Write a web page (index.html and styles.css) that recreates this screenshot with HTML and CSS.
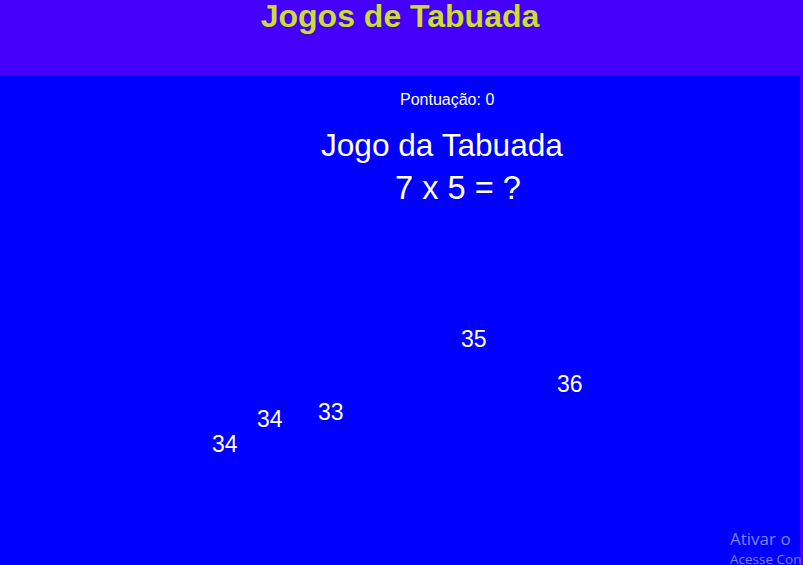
FILE: index.html
```html
<!DOCTYPE html>
<html lang="pt-BR">
<head>
<meta charset="utf-8">
<title>Jogos de Tabuada</title>
<link rel="stylesheet" href="styles.css">
</head>
<body>
  <header class="topbar">
    <h1 class="title">Jogos de Tabuada</h1>
  </header>
  <main class="game">
    <p class="score">Pontuação: 0</p>
    <h2 class="game-title">Jogo da Tabuada</h2>
    <p class="question">7 x 5 = ?</p>
    <div class="arena">
      <span class="answer" style="left:461px; top:122px">35</span>
      <span class="answer" style="left:557px; top:166.5px">36</span>
      <span class="answer" style="left:318px; top:195px">33</span>
      <span class="answer" style="left:257px; top:201.5px">34</span>
      <span class="answer" style="left:212px; top:227px">34</span>
    </div>
  </main>
  <div class="watermark">
    <div class="wm-title">Ativar o</div>
    <div class="wm-sub">Acesse Con</div>
  </div>
</body>
</html>
```

FILE: styles.css
```css
html, body {
  margin: 0;
  padding: 0;
  height: 100%;
  overflow: hidden;
}

body {
  background: rgb(68, 0, 250);
  font-family: "Liberation Sans", Arial, sans-serif;
  position: relative;
}

.topbar {
  height: 75px;
  background: rgb(68, 0, 250);
}

.title {
  margin: 0;
  width: 800px;
  text-align: center;
  font-size: 32px;
  line-height: 32px;
  font-weight: bold;
  color: #cddc39;
  text-shadow: 0 1px 1px rgba(40, 40, 0, 0.35);
}

.game {
  width: 800px;
  height: calc(100% - 75px);
  background: #0000ff;
  color: #ffffff;
  padding-top: 16px;
  box-sizing: border-box;
  display: flex;
  flex-direction: column;
}

.score {
  margin: 0 0 0 400px;
  font-size: 16px;
  line-height: 18px;
}

.game-title {
  margin: 18px 0 0 321px;
  font-size: 31.6px;
  line-height: 36px;
  font-weight: normal;
}

.question {
  margin: 7px 0 0 395px;
  font-size: 32.6px;
  line-height: 36px;
}

.arena {
  position: relative;
  flex: 1;
}

.answer {
  position: absolute;
  font-size: 23px;
  line-height: 23px;
  color: #ffffff;
}

.watermark {
  position: absolute;
  left: 730px;
  top: 527px;
  white-space: nowrap;
  color: rgba(255, 255, 255, 0.5);
  font-family: "Open Sans", "Noto Sans", sans-serif;
}

.wm-title {
  font-size: 17px;
  line-height: 24px;
}

.wm-sub {
  font-size: 13.5px;
  line-height: 16px;
}
```
